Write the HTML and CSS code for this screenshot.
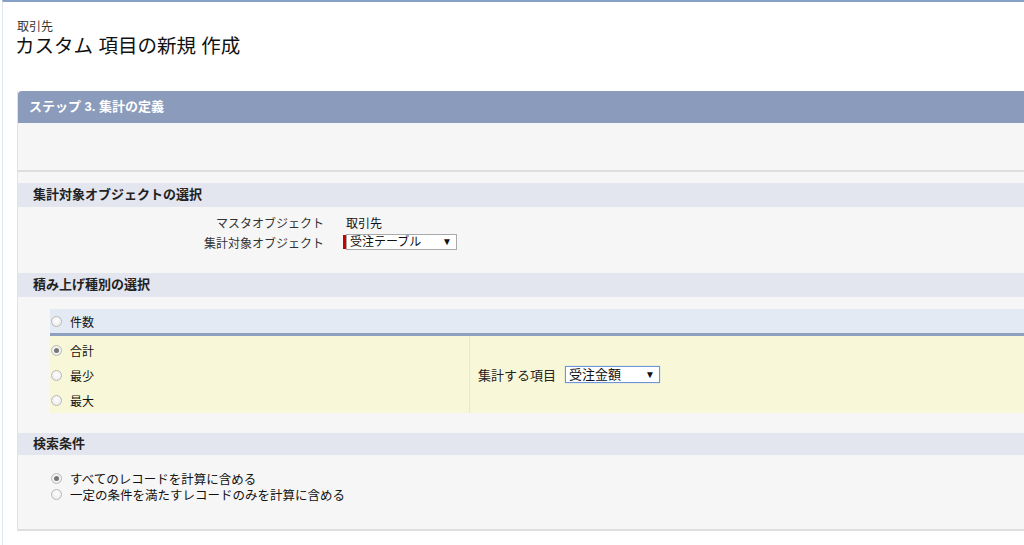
FILE: index.html
```html
<!DOCTYPE html>
<html lang="ja">
<head>
    <meta charset="UTF-8">
    <title>カスタム項目の新規作成</title>
    <link rel="stylesheet" href="styles.css">
</head>
<body>
    <div class="page">
        <div class="page-title">
            <div class="page-type">取引先</div>
            <h1>カスタム 項目の新規 作成</h1>
        </div>

        <div class="panel">
            <div class="panel-head">ステップ 3. 集計の定義</div>
            <div class="panel-top"></div>

            <!-- 集計対象オブジェクト -->
            <h3 class="section">集計対象オブジェクトの選択</h3>
            <div class="fields">
                <div class="field">
                    <span class="label">マスタオブジェクト</span>
                    <span class="value">取引先</span>
                </div>
                <div class="field">
                    <span class="label">集計対象オブジェクト</span>
                    <span class="value">
                        <span class="required"></span>
                        <span class="select select-wide">受注テーブル<span class="arrow">▼</span></span>
                    </span>
                </div>
            </div>

            <!-- 積み上げ種別 -->
            <h3 class="section">積み上げ種別の選択</h3>
            <div class="rollup">
                <div class="rollup-count">
                    <label class="radio"><span class="dot"></span>件数</label>
                </div>
                <div class="rollup-body">
                    <div class="rollup-options">
                        <label class="radio"><span class="dot checked"></span>合計</label>
                        <label class="radio"><span class="dot"></span>最少</label>
                        <label class="radio"><span class="dot"></span>最大</label>
                    </div>
                    <div class="rollup-field">
                        <span class="field-name">集計する項目</span>
                        <span class="select select-focus">受注金額<span class="arrow">▼</span></span>
                    </div>
                </div>
            </div>

            <!-- 検索条件 -->
            <h3 class="section section-last">検索条件</h3>
            <div class="criteria">
                <label class="radio"><span class="dot checked"></span>すべてのレコードを計算に含める</label>
                <label class="radio"><span class="dot"></span>一定の条件を満たすレコードのみを計算に含める</label>
            </div>
        </div>
    </div>
</body>
</html>
```

FILE: styles.css
```css
html, body {
    margin: 0;
    background: #fff;
    overflow: hidden;
}
body {
    font-family: "Liberation Sans", "Noto Sans CJK JP", sans-serif;
    font-size: 12px;
    color: #222;
}
.page {
    height: 543px;
    border-top: 2px solid #86a0c8;
    border-left: 1px solid #dfe5ee;
    margin-left: 2px;
}
.page-title {
    padding: 18px 0 0 12px;
    height: 71px;
    box-sizing: border-box;
}
.page-type {
    font-size: 12px;
    line-height: 14px;
    color: #333;
    padding-left: 2px;
}
h1 {
    margin: 0;
    font-size: 19.5px;
    font-weight: normal;
    line-height: 24px;
    color: #111;
}
.panel {
    margin: 18px 0 0 14px;
    background: #f6f6f6;
    border-left: 1px solid #e2e2e2;
}
.panel-head {
    height: 32px;
    line-height: 32px;
    padding-left: 11px;
    background: #8a9bbb;
    border-radius: 4px 0 0 0;
    color: #fff;
    font-weight: bold;
    font-size: 13px;
}
.panel-top {
    height: 47px;
    border-bottom: 2px solid #dedede;
    margin-bottom: 11px;
}
.section {
    margin: 0;
    height: 24px;
    line-height: 24px;
    padding-left: 15px;
    background: #e3e5ef;
    font-size: 13px;
    font-weight: bold;
    color: #222;
}
.fields {
    padding: 5px 0 21px;
}
.field {
    display: flex;
    height: 20px;
    align-items: center;
}
.label {
    width: 306px;
    text-align: right;
    color: #333;
}
.value {
    display: flex;
    align-items: center;
    margin-left: 22px;
    color: #111;
}
.required {
    width: 3px;
    height: 14px;
    background: #c00;
    margin-left: -3px;
}
.select {
    display: inline-flex;
    justify-content: space-between;
    align-items: center;
    height: 14px;
    line-height: 14px;
    padding: 0 4px 0 3px;
    background: #fff;
    border: 1px solid #a9a9a9;
    box-sizing: content-box;
    color: #111;
}
.select-wide {
    width: 102px;
}
.select-focus {
    width: 86px;
    height: 15px;
    font-size: 13px;
    border: 1px solid #6f95d8;
    box-shadow: 0 0 1px #9db8e6;
}
.arrow {
    font-size: 10px;
}
.rollup {
    margin: 12px 0 20px 32px;
}
.rollup-count {
    height: 24px;
    display: flex;
    align-items: center;
    background: #e3eaf3;
    border-bottom: 3px solid #8ea0c0;
}
.rollup-body {
    display: flex;
    background: #f8f7d8;
    height: 77px;
}
.rollup-options {
    width: 419px;
    padding-top: 2px;
    border-right: 1px solid #e9e8cf;
}
.rollup-options .radio {
    height: 25px;
}
.rollup-field {
    display: flex;
    align-items: center;
    padding-left: 8px;
}
.field-name {
    font-size: 13px;
    margin-right: 9px;
    color: #222;
}
.radio {
    display: flex;
    align-items: center;
    padding-left: 1px;
    color: #111;
}
.dot {
    width: 9px;
    height: 9px;
    border: 1px solid #b9b9b9;
    border-radius: 50%;
    background: radial-gradient(circle at 50% 40%, #fff, #e6e6e6);
    margin-right: 8px;
    position: relative;
}
.dot.checked::after {
    content: "";
    position: absolute;
    left: 2px;
    top: 2px;
    width: 5px;
    height: 5px;
    border-radius: 50%;
    background: #777;
}
.section-last {
    height: 22px;
    line-height: 22px;
}
.criteria {
    padding: 15px 0 0 32px;
    height: 59px;
    font-size: 12.5px;
    border-bottom: 2px solid #dedede;
}
.criteria .radio {
    height: 16px;
}
```
